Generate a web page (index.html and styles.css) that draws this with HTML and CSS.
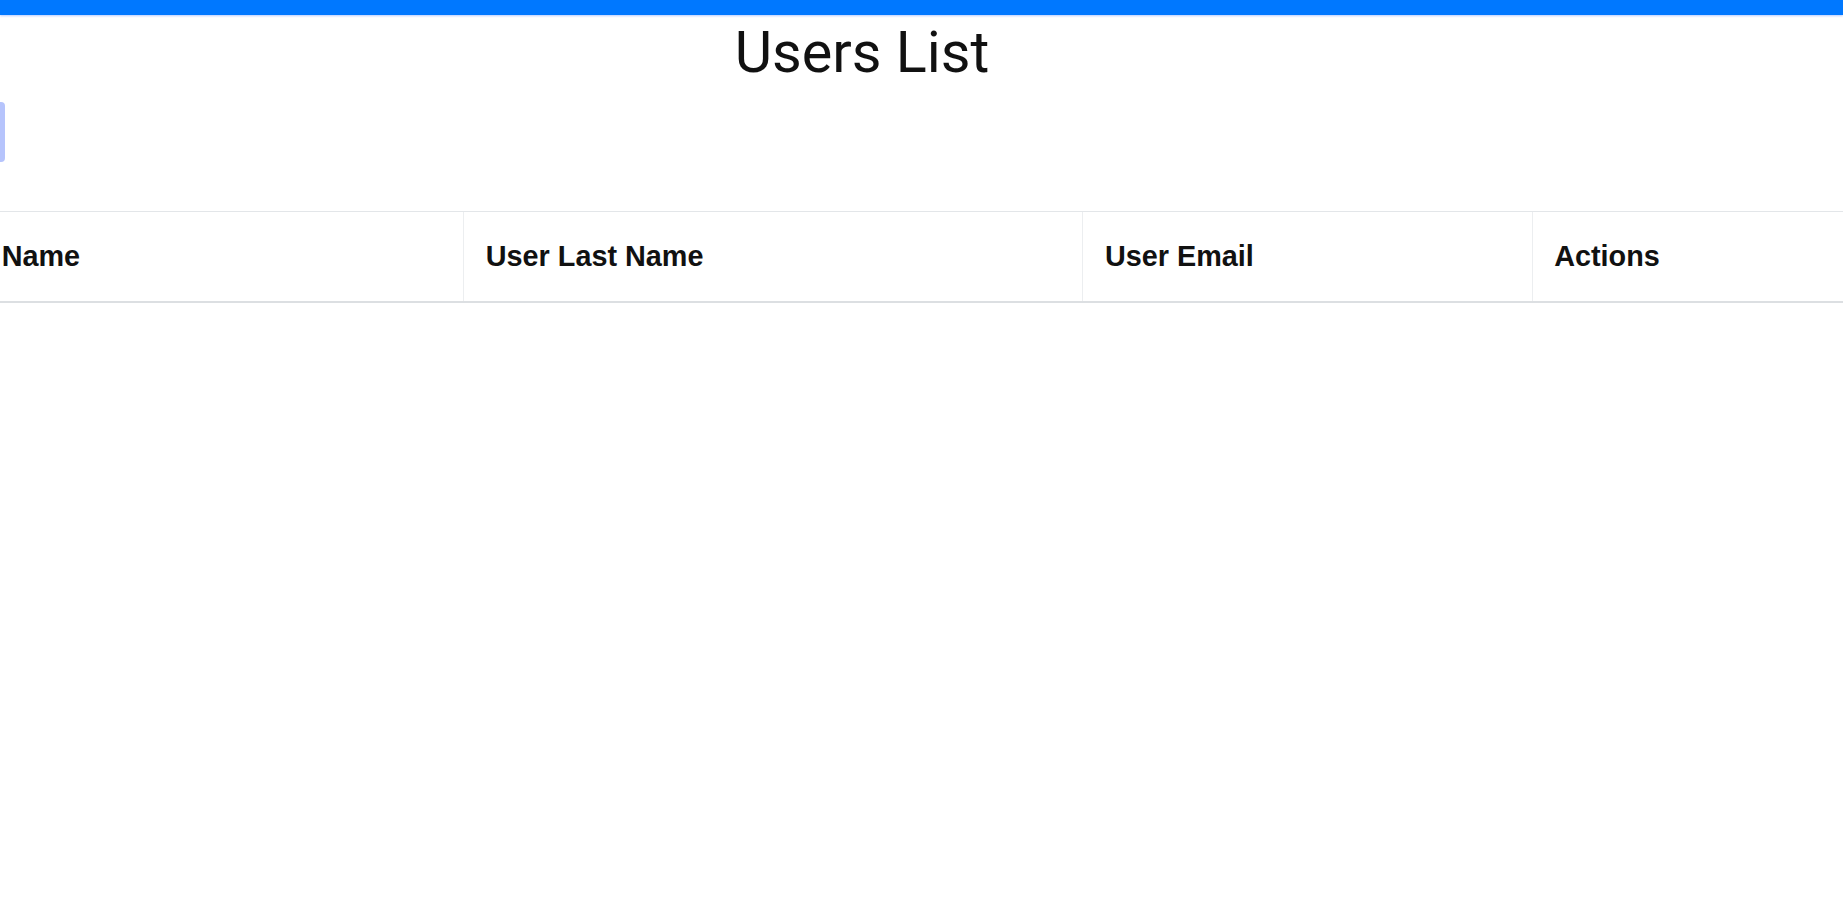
FILE: index.html
```html
<!DOCTYPE html>
<html lang="en">
<head>
<meta charset="utf-8">
<title>Users List</title>
<link rel="stylesheet" href="styles.css">
</head>
<body>
<div class="topbar"></div>
<main class="page">
  <h2 class="title">Users List</h2>
  <div class="toolbar"><span class="add-btn"></span></div>
  <table class="users">
    <thead>
      <tr>
        <th class="col-first">User Name</th>
        <th class="col-last">User Last Name</th>
        <th class="col-email">User Email</th>
        <th class="col-actions">Actions</th>
      </tr>
    </thead>
    <tbody></tbody>
  </table>
</main>
</body>
</html>
```
FILE: styles.css
```css
html, body {
  margin: 0;
  padding: 0;
  background: #ffffff;
  overflow: hidden;
}

body {
  font-family: "Liberation Sans", Arial, sans-serif;
  color: #212529;
}

.topbar {
  height: 15px;
  background: #0078ff;
  box-shadow: 0 1px 2px rgba(90, 140, 255, 0.45);
}

.page {
  margin-left: -92px;
  width: 1908px;
  padding-top: 3px;
}

.title {
  margin: 0;
  text-align: center;
  font-family: Roboto, "Liberation Sans", sans-serif;
  font-weight: 400;
  font-size: 57.6px;
  line-height: 1.2;
  color: #111111;
}

.toolbar {
  margin-top: 15px;
  height: 60px;
  display: flex;
  align-items: stretch;
}

.add-btn {
  display: block;
  width: 97px;
  background: #b6c4fc;
  border-radius: 4px;
}

.users {
  margin-top: 49px;
  width: 2100px;
  border-collapse: collapse;
  table-layout: fixed;
}

.users th {
  text-align: left;
  font-weight: 700;
  font-size: 28.8px;
  line-height: 1.5;
  padding: 23px 21.6px;
  border-top: 1px solid #e3e6e9;
  border-bottom: 2px solid #dcdfe2;
  border-left: 1px solid #eceef0;
  color: #111111;
}

.users th.col-first {
  border-left: none;
  width: 512px;
}

.users th.col-last {
  width: 575px;
}

.users th.col-email {
  width: 405px;
}
```
